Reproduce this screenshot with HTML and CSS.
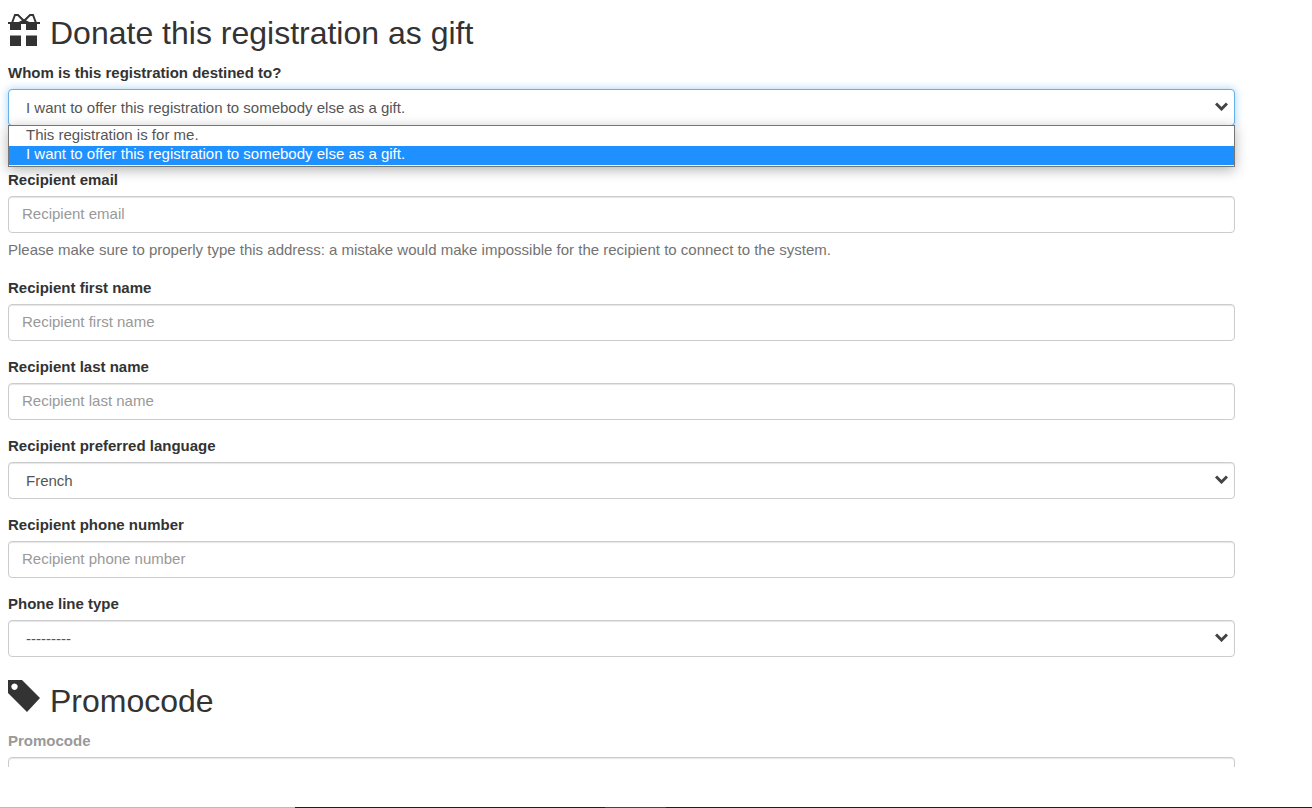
FILE: index.html
```html
<!DOCTYPE html>
<html lang="en">
<head>
    <meta charset="UTF-8">
    <meta name="viewport" content="width=device-width, initial-scale=1.0">
    <title>Registration</title>
    <link rel="stylesheet" href="styles.css">
</head>
<body>
    <main>
        <form>
            <h2>
                <svg class="icon" viewBox="0 0 32 36" aria-hidden="true">
                    <path d="M2 12h11v7H2zM18 12h11v7H18zM2 24.500h11V35H2zM18 24.500h11V35H18z"/>
                    <path d="M0 12h32M4 12L7 4L10 4L16 10L22 4L25 4L28 12M11 12L16 9.500L21 12" fill="none" stroke="#333" stroke-width="2"/>
                </svg>
                Donate this registration as gift
            </h2>
            <div class="form-group has-menu">
                <label for="destined">Whom is this registration destined to?</label>
                <div class="select-box">
                    <select id="destined" class="form-control focused">
                        <option>This registration is for me.</option>
                        <option selected>I want to offer this registration to somebody else as a gift.</option>
                    </select>
                    <svg class="chevron" viewBox="0 0 13 9"><path d="M1 1.500l5.500 5.500L12 1.500"/></svg>
                    <ul class="menu">
                        <li>This registration is for me.</li>
                        <li class="active">I want to offer this registration to somebody else as a gift.</li>
                    </ul>
                </div>
            </div>
            <div class="form-group">
                <label for="email">Recipient email</label>
                <input type="email" id="email" class="form-control" placeholder="Recipient email">
                <p class="help">Please make sure to properly type this address: a mistake would make impossible for the recipient to connect to the system.</p>
            </div>
            <div class="form-group">
                <label for="first-name">Recipient first name</label>
                <input type="text" id="first-name" class="form-control" placeholder="Recipient first name">
            </div>
            <div class="form-group">
                <label for="last-name">Recipient last name</label>
                <input type="text" id="last-name" class="form-control" placeholder="Recipient last name">
            </div>
            <div class="form-group">
                <label for="language">Recipient preferred language</label>
                <div class="select-box">
                    <select id="language" class="form-control">
                        <option>French</option>
                    </select>
                    <svg class="chevron" viewBox="0 0 13 9"><path d="M1 1.500l5.500 5.500L12 1.500"/></svg>
                </div>
            </div>
            <div class="form-group">
                <label for="phone">Recipient phone number</label>
                <input type="tel" id="phone" class="form-control" placeholder="Recipient phone number">
            </div>
            <div class="form-group">
                <label for="line-type">Phone line type</label>
                <div class="select-box">
                    <select id="line-type" class="form-control">
                        <option>---------</option>
                    </select>
                    <svg class="chevron" viewBox="0 0 13 9"><path d="M1 1.500l5.500 5.500L12 1.500"/></svg>
                </div>
            </div>
            <h2>
                <svg class="icon" viewBox="0 0 32 36" aria-hidden="true">
                    <path fill-rule="evenodd" d="M0 1h14l18 18-13 14L0 14zM6.500 4.500a3.200 3.200 0 1 0 .01 0z"/>
                </svg>
                Promocode
            </h2>
            <div class="form-group optional">
                <label for="promocode">Promocode</label>
                <input type="text" id="promocode" class="form-control">
            </div>
        </form>
    </main>
    <footer></footer>
</body>
</html>
```

FILE: styles.css
```css
* {
    box-sizing: border-box;
    padding: 0;
    margin: 0;
}
body {
    display: flex;
    flex-direction: column;
    height: 100vh;
    overflow: hidden;
    background-color: white;
    color: #333;
    font-family: "Liberation Sans", Arial, sans-serif;
    font-size: 15px;
    line-height: 20px;
}
main {
    flex: 1;
    min-height: 0;
    margin-bottom: 40px;
    padding: 11px 77px 0 8px;
    overflow: hidden;
}
h2 {
    display: flex;
    gap: 10px;
    margin-bottom: 8px;
    font-size: 32px;
    font-weight: 400;
    line-height: 44px;
}
.form-group + h2 {
    margin-top: 22px;
}
.icon {
    width: 32px;
    height: 36px;
    fill: #333;
}
.form-group {
    margin-bottom: 16px;
}
.has-menu {
    margin-bottom: 44px;
}
label {
    display: block;
    margin-bottom: 6px;
    font-weight: 700;
}
.optional label {
    color: #999;
}
.form-control {
    display: block;
    width: 100%;
    height: 37px;
    padding: 0 13px 2px;
    border: 1px solid #ccc;
    border-radius: 4px;
    box-shadow: inset 0 1px 1px rgba(0, 0, 0, .1);
    background-color: white;
    color: #555;
    font: inherit;
}
.form-control::placeholder {
    color: #999;
}
select.form-control {
    padding: 0 17px;
    appearance: none;
}
.form-control.focused {
    border-color: #66afe9;
    outline: 0;
    box-shadow: 0 0 8px rgba(102, 175, 233, .6);
}
.select-box {
    position: relative;
}
.chevron {
    position: absolute;
    top: 13px;
    right: 7px;
    width: 13px;
    height: 9px;
    fill: none;
    stroke: #444;
    stroke-width: 3;
    pointer-events: none;
}
.menu {
    position: absolute;
    top: 36px;
    left: 0;
    right: 0;
    padding: 1px 0;
    border: 1px solid #767676;
    box-shadow: 0 3px 12px rgba(0, 0, 0, .3);
    background-color: white;
    color: #555;
    line-height: 16px;
    list-style: none;
}
.menu li {
    padding: 0 17px 3px;
}
.menu .active {
    background-color: #1e90ff;
    color: white;
}
.help {
    margin: 6px 0 17px;
    color: #737373;
    line-height: 22px;
}
footer {
    height: 1px;
    background: linear-gradient(90deg, #bbb 295px, #1d1d20 295px 605px, #444 605px 666px, #1d1d20 666px);
}
```
